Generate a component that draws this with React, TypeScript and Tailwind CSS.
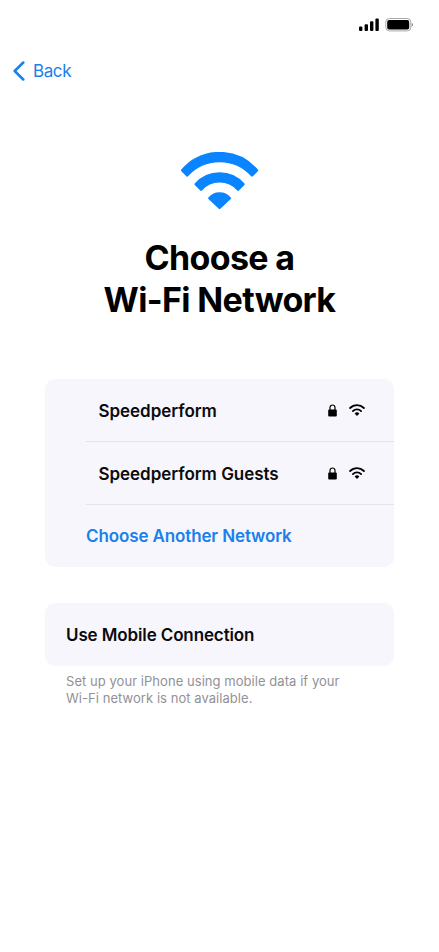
import React from 'react';
import { clsx } from 'clsx';

const networks = ['Speedperform', 'Speedperform Guests'];

function StatusBar() {
  return (
    <div className="flex h-[50px] items-center justify-end pr-[26px]">
      <svg width="54" height="14" viewBox="0 0 54 14" fill="none">
        <rect x="0" y="8.5" width="3.4" height="4.6" rx="1" fill="#000" />
        <rect x="5.6" y="6.2" width="3.4" height="6.9" rx="1" fill="#000" />
        <rect x="11" y="3.3" width="3.4" height="9.8" rx="1" fill="#000" />
        <rect x="16.4" y="0.4" width="3.4" height="12.7" rx="1" fill="#000" />
        <rect x="26.8" y="0.5" width="25" height="12.4" rx="3.6" stroke="#a9a9a9" />
        <rect x="28.2" y="1.9" width="22" height="9.6" rx="2" fill="#000" />
        <path d="M52.8 5v3.6c.8-.3 1.1-1 1.1-1.8s-.3-1.5-1.1-1.8Z" fill="#777" />
      </svg>
    </div>
  );
}

function WifiHero() {
  return (
    <svg
      className="mx-auto block"
      width="81"
      height="58"
      viewBox="-40.6 -57 81 58"
      fill="#0a84ff"
      stroke="#0a84ff"
      strokeWidth="2.4"
      strokeLinejoin="round"
    >
      <path d="M-37.4 -38.6A49 49 0 0 1 37.4 -38.6L32.4 -33.5A43.6 43.6 0 0 0 -32.4 -33.5Z" />
      <path d="M-24 -24.8A32 32 0 0 1 24 -24.8L18.5 -19.3A24.6 24.6 0 0 0 -18.5 -19.3Z" />
      <path d="M-10.3 -10.8A13.5 13.5 0 0 1 10.3 -10.8L0 -1Z" />
    </svg>
  );
}

function WifiSmall() {
  return (
    <svg width="16" height="13" viewBox="0 0 16 13" fill="none" stroke="#000" strokeLinecap="round">
      <path d="M1.1 4A9.8 9.8 0 0 1 14.9 4" strokeWidth="1.8" />
      <path d="M3.9 7.1A5.8 5.8 0 0 1 12.1 7.1" strokeWidth="1.8" />
      <path d="M5.6 9.5A3.3 3.3 0 0 1 10.4 9.5L8 12Z" fill="#000" stroke="none" />
    </svg>
  );
}

function Lock() {
  return (
    <svg width="9" height="13" viewBox="0 0 9 13" fill="none">
      <path d="M2 6V3.5a2.5 2.5 0 0 1 5 0V6" stroke="#000" strokeWidth="1.2" />
      <rect x="0.2" y="5.6" width="8.6" height="7" rx="1" fill="#000" />
    </svg>
  );
}

function NetworkRow({ name }: { name: string }) {
  return (
    <div className="ml-[41px] flex h-[63px] items-center border-b border-[#e4e3ea] pl-[12.5px] pr-[29px] tracking-[-0.04px]">
      <span className="flex-1 pt-[3px]">{name}</span>
      <div className="flex items-center gap-3">
        <Lock />
        <WifiSmall />
      </div>
    </div>
  );
}

export default function App() {
  const card = 'rounded-[10px] bg-[#f7f6fd] text-[17px] font-[560] tracking-[-0.12px] text-[#0b0b0d]';

  return (
    <div className="min-h-[952px] w-full bg-white font-['Inter','Liberation_Sans',sans-serif]">
      <StatusBar />

      {/* Navigation */}
      <div className="flex h-[42px] items-center gap-2 pl-[13px] text-[17px] tracking-[-0.4px] text-[#1a80ec]">
        <svg width="12" height="20" viewBox="0 0 12 20" fill="none">
          <path d="M10.3 1.5L1.7 10L10.3 18.5" stroke="currentColor" strokeWidth="2.5" strokeLinecap="round" strokeLinejoin="round" />
        </svg>
        <span className="pt-[2px]">Back</span>
      </div>

      <div className="pt-[60px]">
        <WifiHero />
      </div>
      <h1 className="mt-[27px] text-center text-[34px] font-bold leading-[42px] tracking-[-0.65px] text-black">
        Choose a
        <br />
        Wi-Fi Network
      </h1>

      <main className="mx-[45px] mt-[58px]">
        <div className={clsx(card, 'h-[188px]')}>
          {networks.map((name) => (
            <NetworkRow key={name} name={name} />
          ))}
          <div className="flex h-[62px] items-center pl-[41px] pt-[2px] text-[#1a80ec]">Choose Another Network</div>
        </div>

        <div className={clsx(card, 'mt-9 flex h-[63px] items-center pl-[21px] pt-[2px]')}>Use Mobile Connection</div>
        <p className="pl-[21px] pt-[7px] text-[13px] leading-[17px] tracking-[0.05px] text-[#929196]">
          Set up your iPhone using mobile data if your
          <br />
          Wi-Fi network is not available.
        </p>
      </main>
    </div>
  );
}
